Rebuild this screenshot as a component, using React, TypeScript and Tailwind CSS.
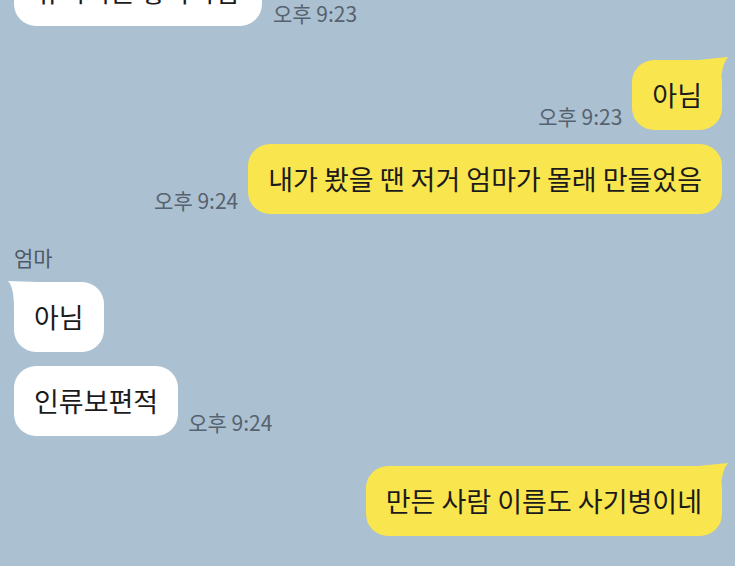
import React from "react";

const font = { fontFamily: '"Noto Sans CJK KR", "Noto Sans", sans-serif' };

function RightTail() {
  return (
    <svg className="absolute right-[-6px] top-[-3px]" width="30" height="28" viewBox="0 0 30 28">
      <path d="M0 3 L30 0 Q23 8 23 28 L0 28 Z" fill="#f9e54e" />
    </svg>
  );
}

function LeftTail() {
  return (
    <svg className="absolute left-[-6px] top-[-1px]" width="30" height="28" viewBox="0 0 30 28">
      <path d="M30 1 L0 0 Q6 6 6 28 L30 28 Z" fill="#ffffff" />
    </svg>
  );
}

function Time({ t }: { t: string }) {
  return (
    <span className="shrink-0 text-[21px] leading-[28px] text-[#56626f] whitespace-nowrap">{t}</span>
  );
}

function Mine({ text, time, tail }: { text: string; time?: string; tail?: boolean }) {
  return (
    <div className="flex justify-end items-end gap-[10px]">
      {time && <Time t={time} />}
      <div className="relative bg-[#f9e54e] rounded-[22px] px-5 py-[19px] text-[27px] leading-[32px] text-[#1b1b1b] whitespace-nowrap">
        {tail && <RightTail />}
        <span className="relative">{text}</span>
      </div>
    </div>
  );
}

function Theirs({ text, time, tail }: { text: string; time?: string; tail?: boolean }) {
  return (
    <div className="flex justify-start items-end gap-[10px]">
      <div className="relative bg-white rounded-[22px] px-5 py-[19px] text-[27px] leading-[32px] text-[#1b1b1b] whitespace-nowrap">
        {tail && <LeftTail />}
        <span className="relative">{text}</span>
      </div>
      {time && <Time t={time} />}
    </div>
  );
}

export default function App() {
  return (
    <div className="w-[735px] h-[566px] overflow-hidden bg-[#abc0d1]" style={font}>
      <div className="pl-[14px] pr-[13px] flex flex-col">
        <div className="mt-[-44px] flex items-end gap-[11px]">
          <div className="w-[248px] bg-white rounded-[22px] py-[19px] text-center text-[27px] leading-[32px] text-[#1b1b1b] whitespace-nowrap">
            뮤지커른 좋아사람
          </div>
          <span className="shrink-0 mb-[1px] text-[21px] leading-[24px] text-[#56626f] whitespace-nowrap">오후 9:23</span>
        </div>

        <div className="mt-[34px] flex flex-col gap-[14px]">
          <Mine text="아님" time="오후 9:23" tail />
          <Mine text="내가 봤을 땐 저거 엄마가 몰래 만들었음" time="오후 9:24" />
        </div>

        <div className="mt-[30px] text-[21px] leading-[26px] text-[#4f5a66]">엄마</div>
        <div className="mt-[12px] flex flex-col gap-[14px]">
          <Theirs text="아님" tail />
          <Theirs text="인류보편적" time="오후 9:24" />
        </div>

        <div className="mt-[30px] flex flex-col gap-[14px]">
          <Mine text="만든 사람 이름도 사기병이네" tail />
        </div>
      </div>
    </div>
  );
}
